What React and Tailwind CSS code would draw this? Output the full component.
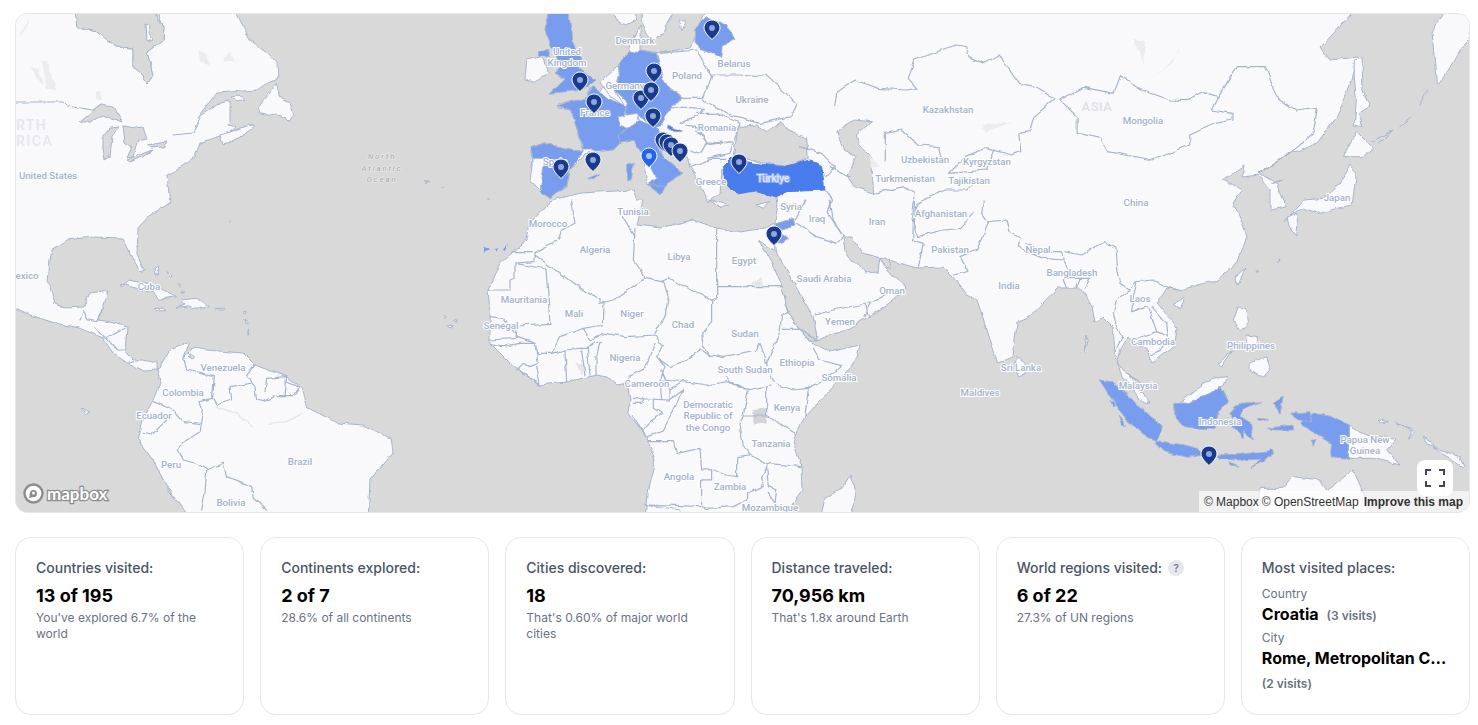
import React from "react";

// zoom-space helpers: coordinates below were read off crops of the map
const EUR = "translate(500 10) scale(.3333)";
const AFR = "translate(480 200) scale(.3333)";
const ASIA = "translate(800 10) scale(.433 .3333)";
const SASIA = "translate(850 200) scale(.3333)";
const SEA = "translate(1080 360) scale(.3333)";
const AME = "translate(10 260) scale(.3333)";

const LAND = "#f9f9fc";
const SEA_C = "#d9d9d9";
const COAST = "#a6b4cc";
const BLUE = "#789cee";
const DARK = "#4a7bec";

const Shape = ({ d, fill = LAND, stroke = COAST, w = 1 }) => (
  <path d={d} fill={fill} stroke={stroke} strokeWidth={w} strokeLinejoin="round" vectorEffect="non-scaling-stroke" />
);

const Lines = ({ d, w = 1.2, stroke = "#a6b4cc" }) => (
  <path d={d} fill="none" stroke={stroke} strokeWidth={w} strokeLinejoin="round" strokeLinecap="round" vectorEffect="non-scaling-stroke" />
);

const labels = [
  ["United States", 48, 179], ["Kazakhstan", 948, 113], ["Mongolia", 1143, 124], ["China", 1136, 206], ["Japan", 1337, 201],
  ["Uzbekistan", 925, 163], ["Kyrgyzstan", 987, 165], ["Turkmenistan", 905, 182], ["Tajikistan", 969, 184], ["Afghanistan", 941, 217],
  ["Iran", 877, 225], ["Iraq", 817, 222], ["Syria", 791, 210], ["Pakistan", 950, 253], ["Nepal", 1038, 253], ["Bangladesh", 1072, 276],
  ["India", 1009, 289], ["Oman", 892, 294], ["Saudi Arabia", 824, 282], ["Yemen", 840, 325], ["Laos", 1140, 302], ["Cambodia", 1153, 345],
  ["Philippines", 1251, 349], ["Malaysia", 1138, 389], ["Sri Lanka", 1021, 371], ["Maldives", 980, 396], ["Indonesia", 1220, 425],
  ["Papua New", 1365, 443], ["Guinea", 1365, 454], ["Denmark", 635, 44], ["United", 567, 55], ["Kingdom", 567, 66], ["Germany", 625, 89],
  ["France", 595, 116], ["Poland", 687, 79], ["Belarus", 734, 67], ["Ukraine", 752, 103], ["Romania", 717, 131], ["Greece", 711, 185],
  ["Spain", 555, 165], ["Tunisia", 633, 215], ["Morocco", 548, 227], ["Algeria", 595, 253], ["Libya", 679, 260], ["Egypt", 744, 264],
  ["Mauritania", 524, 303], ["Mali", 574, 317], ["Niger", 632, 317], ["Chad", 683, 328], ["Sudan", 745, 337], ["South Sudan", 745, 373],
  ["Ethiopia", 797, 366], ["Somalia", 839, 381], ["Senegal", 501, 329], ["Nigeria", 625, 361], ["Cameroon", 647, 387], ["Kenya", 787, 411],
  ["Democratic", 708, 408], ["Republic of", 708, 419], ["the Congo", 708, 431], ["Tanzania", 771, 447], ["Angola", 679, 480], ["Zambia", 730, 490],
  ["Mozambique", 770, 511], ["Cuba", 149, 290], ["exico", 27, 279], ["Venezuela", 223, 371], ["Colombia", 183, 396], ["Ecuador", 154, 419],
  ["Peru", 171, 468], ["Brazil", 300, 465], ["Bolivia", 231, 506],
];

const pins = [
  [712, 20], [580, 72], [654, 63], [641, 90], [651, 82], [594, 94], [653, 108], [663, 132], [667, 134], [671, 137], [680, 143],
  [649, 148, true], [593, 152], [561, 159], [739, 154], [774, 226], [1209, 446],
];

const Pin = ({ x, y, active }) => (
  <g transform={`translate(${x - 8} ${y})`}>
    <path d="M8 0C3.6 0 0 3.5 0 7.8 0 12.5 6 17.8 8 19.5 10 17.8 16 12.5 16 7.8 16 3.5 12.4 0 8 0Z" fill={active ? "#2563eb" : "#1a3a8c"} stroke="#fff" strokeWidth="1" />
    <circle cx="8" cy="8" r="3" fill={active ? "#a9c4f7" : "#8fa7dc"} />
  </g>
);

const WorldMap = () => (
  <svg viewBox="16 14 1453 498" className="block w-full h-full font-['Roboto',sans-serif]">
    <defs>
      <filter id="rough" filterUnits="userSpaceOnUse" x="0" y="0" width="1478" height="725">
        <feTurbulence type="fractalNoise" baseFrequency=".09" numOctaves="3" seed="4" result="n" />
        <feDisplacementMap in="SourceGraphic" in2="n" scale="4.5" xChannelSelector="R" yChannelSelector="G" />
      </filter>
    </defs>
    <rect x="0" y="0" width="1478" height="725" fill={SEA_C} />

    <g filter="url(#rough)">
      {/* north america */}
      <Shape d="M0 0 75 0 77 28 97 32 117 47 133 48 133 67 140 72 147 83 153 75 147 52 163 40 164 27 153 0 237 0 237 14 245 30 250 40 268 53 277 63 278 78 267 83 257 90 230 92 217 93 207 105 197 118 220 102 230 100 230 120 228 125 237 127 230 132 217 137 200 143 195 157 180 167 167 175 170 203 150 215 138 228 137 255 143 268 146 270 140 272 133 258 123 238 93 237 67 240 52 250 50 260 48 283 55 303 67 308 83 307 90 293 108 290 103 308 98 320 110 322 127 327 125 350 133 360 143 360 157 363 157 369 143 370 130 365 113 353 103 338 80 328 55 323 30 315 0 300Z" />
      <Shape d="M75 10 77 28 97 32 117 47 133 48 133 67 140 72 147 83 153 75 147 52 163 40 164 27 153 10Z" fill={SEA_C} />
      <Shape d="M160 367 170 350 190 342 183 358 193 348 207 350 243 353 255 365 287 377 302 387 308 408 338 423 363 425 390 438 392 453 370 480 368 520 190 520 167 487 153 460 138 440 143 420 153 400 160 383 157 368Z" />
      <Shape d="M80 122 100 105 113 107 122 122 103 115 90 122Z" fill={SEA_C} />
      <Shape d="M103 137 110 128 120 127 112 137 110 157 105 160 103 150Z" fill={SEA_C} />
      <Shape d="M123 125 143 128 147 138 138 140 133 157 127 158 132 147 125 142Z" fill={SEA_C} />
      <Shape d="M127 160 152 150 143 157 130 162Z" fill={SEA_C} />
      <Shape d="M147 145 167 142 163 147 150 148Z" fill={SEA_C} />
      <Shape d="M277 82 258 107 260 113 277 115 285 117 290 122 294 115 290 103 278 97Z" />
      <Shape d="M220 135 230 132 250 125 255 127 248 132 230 143 223 145Z" />
      <Shape d="M232 97 240 96 245 100 238 102Z" />
      <Shape d="M146 24 150 26 149 34 152 40 147 42Z" />
      <Lines d="M15 102 63 102 67 106 93 110 100 105 M173 135 193 133 200 118" w={1} />
      <path d="M22 30 28 20 26 30 19 37Z M30 67 37 68 43 85 39 82Z M42 60 48 61 56 90 47 90Z M197 50 206 54 210 67 202 62Z M223 58 230 53 235 61 225 62Z M97 92 101 91 102 100 97 100Z" fill="#ececee" />
      <path d="M423 180 432 181 426 183Z M440 186 445 187 441 188Z M229 222 231 220 230 224Z M487 198 490 198 488 200Z" fill={COAST} />

      {/* caribbean, central and south america detail */}
      <g transform={AME}>
        <Shape d="M325 80 360 60 400 70 450 85 500 110 445 118 430 95 380 85 345 75Z" />
        <Shape d="M510 120 560 115 595 140 545 150 540 140 500 145 525 135Z" />
        <Shape d="M433 145 465 145 468 152 445 153Z" />
        <Shape d="M615 145 645 145 640 150 620 150Z" />
        <Shape d="M435 25 445 20 445 45 438 45Z M470 35 490 50 485 55Z M505 70 515 75 510 80Z M510 95 520 90 515 100Z M705 175 715 190 708 195Z M715 210 720 225 712 225Z M700 155 708 155 705 165Z M215 448 240 455 225 465Z M1300 165 1310 170 1303 175Z M1335 175 1342 185 1335 185Z M1315 198 1330 195 1325 205Z" />
        <Shape d="M540 280 550 290 545 300 535 295Z" fill={SEA_C} />
        <Lines d="M210 180 220 155 235 180 260 185 280 140 M255 205 285 235 M290 235 345 205 M290 235 320 270 340 270 M370 305 360 310 M520 290 530 330 610 350 605 410 620 435 665 420 660 380 720 370 M735 315 710 350 735 380 740 420 760 425 790 410 M765 395 770 355 830 350 825 410 M825 360 870 380 850 410 800 410 M605 415 570 425 580 460 570 515 515 550 505 570 520 600 560 610 590 630 640 610 650 650 725 680 730 715 770 750 M430 425 490 450 520 485 570 490 M400 520 425 525 480 470 M590 630 585 700 575 750" />
        <Lines d="M615 440 680 460 730 500 M775 490 830 485 880 460" stroke="#e4e4e8" />
      </g>

      {/* afro-eurasia */}
      <Shape d="M540 190 530 180 533 160 530 148 543 143 583 152 575 123 572 110 557 108 557 105 587 98 590 87 600 93 607 82 618 65 628 53 630 43 640 25 640 50 660 53 690 48 697 35 700 22 710 0 1352 0 1352 13 1320 48 1328 60 1359 57 1352 77 1337 117 1317 143 1298 152 1289 153 1259 173 1276 183 1287 207 1270 210 1270 190 1259 175 1242 177 1244 165 1222 180 1242 190 1233 203 1244 227 1247 237 1237 263 1217 280 1180 290 1167 288 1157 303 1177 327 1175 345 1152 363 1148 350 1128 337 1122 347 1117 363 1130 377 1150 403 1143 402 1122 377 1115 353 1113 327 1103 317 1095 322 1092 305 1080 288 1057 288 1030 317 1017 323 1013 357 998 363 977 300 965 293 953 277 943 267 917 268 888 260 885 268 907 287 890 303 868 317 850 328 817 340 813 317 790 277 775 252 773 232 778 205 777 197 757 192 737 195 727 183 722 170 720 193 708 202 697 180 690 167 685 150 660 133 658 143 663 157 682 173 677 177 667 183 662 193 648 185 643 153 633 140 620 143 613 150 587 153 570 170 567 187 555 193 550 198Z" />
      <Shape d="M552 200 580 193 633 190 637 200 643 200 637 225 660 228 693 220 717 228 740 232 765 228 773 222 775 250 782 285 788 313 808 340 817 345 830 352 860 345 857 357 833 387 805 417 797 430 793 443 802 467 803 490 780 520 645 520 647 493 655 460 647 437 628 413 630 400 627 383 617 385 608 377 597 375 567 382 540 385 510 363 490 343 490 313 488 290 500 263 513 252 527 240 530 223Z" />
      {/* seas */}
      <g transform={EUR}>
        <Shape d="M700 435 715 350 770 345 800 365 845 335 860 360 920 385 925 445 860 470 770 455 735 440Z" fill={SEA_C} />
        <Shape d="M335 -20 400 -20 410 30 380 45 350 35Z" />
        <Shape d="M430 -20 535 -20 500 40 490 70 460 90 440 75 425 40Z" />
        <Shape d="M540 30 560 30 545 65Z" />
        <Shape d="M80 150 120 140 140 170 145 190 100 215 75 210Z" />
        <Shape d="M768 585 810 575 790 595Z" />
        <Shape d="M625 570 690 585 660 590Z" />
      </g>
      <g transform={AFR}>
        <Shape d="M835 120 870 145 885 150 930 230 970 300 1000 350 1012 420 985 420 925 340 905 255 880 195 860 160Z" fill={SEA_C} />
        <Shape d="M1110 825 1130 880 1105 960 1020 960 1035 895 1090 860Z" />
        <path d="M820 630 860 625 860 670 820 675Z" fill="#d4d4d6" />
        <path d="M815 255 845 230 850 262 835 258Z M285 485 315 495 305 525Z" fill="#e6e6e8" />
        <Lines d="M275 0 285 70 245 90 235 120 165 155 165 185 M100 155 160 155 M160 185 105 190 105 235 90 240 90 270 25 270 M165 165 320 280 360 295 360 310 400 300 495 235 M198 207 210 370 110 375 M198 207 105 190 M372 310 370 375 310 385 M465 85 460 180 490 220 495 235 M430 50 465 110 M495 235 545 245 565 235 695 300 710 295 710 85 M712 260 905 260 M550 245 565 290 555 350 525 400 M310 385 330 420 370 400 440 410 525 405 M695 300 695 365 665 400 670 440 690 470 M540 480 570 500 620 480 660 450 690 470 M525 405 550 440 530 470 555 500 540 540 545 600 M525 430 490 510 445 530 430 555 M690 470 710 465 730 470 780 460 830 450 840 430 855 470 860 490 M860 490 900 395 905 345 930 335 M905 385 960 385 1010 420 M1000 445 1020 480 1085 497 1030 540 985 565 M885 550 940 570 985 565 M860 490 870 530 880 545 M570 570 610 545 680 555 740 545 805 570 M740 530 750 545 805 570 870 555 M805 570 790 645 860 645 860 560 M985 565 975 650 M860 645 945 700 M790 645 780 670 790 740 810 765 M810 765 860 790 965 800 M810 765 770 770 770 830 M505 725 580 725 590 760 660 745 665 810 695 810 695 840 665 840 665 920 M460 595 570 600 610 570 575 640 550 690 500 710 460 650 M460 610 490 610 490 595 M520 595 520 625 545 640 510 665 490 690 M545 540 610 545 M545 510 570 570 570 600 M700 810 740 825 770 830 M865 790 845 830 850 860 800 880 800 900 760 920 680 925 665 920 M860 800 865 860 890 870 885 910 865 880 M495 912 660 920 M495 912 600 930 M110 375 105 410 165 430 175 460 215 460 240 410 310 385 M175 460 215 460 255 450 300 445 320 445 345 425 365 425 M255 450 260 545 M305 450 315 525 M322 445 330 525 M348 470 348 525 M360 425 350 470 M30 350 70 355 105 400 M30 420 110 415 M30 430 75 440 M60 440 120 430 165 430 175 490 150 500 130 490 110 510 M180 555 170 500 M120 510 180 555 M1005 345 1060 330 1155 312 1205 295 1230 265 M1155 312 1170 350 M945 60 975 0 M950 70 1010 110 1070 130 1090 110 M1050 0 1060 60 1090 110" />
        <path d="M10 140 35 150 15 158Z M45 150 55 145 50 158Z M68 150 85 130 75 152Z" fill={BLUE} />
      </g>
      <Shape d="M843 238 852 238 862 253 888 260 892 267 885 268 880 258 878 272 865 273 858 263 851 260 845 250Z" fill={SEA_C} />

      <g transform={ASIA}>
        <Shape d="M85 365 125 330 165 335 130 375 135 400 165 440 170 550 125 530 110 500 130 440 100 420Z" fill={SEA_C} />
        <path d="M875 100 860 160 805 210 840 180 870 130Z M420 345 490 335 430 365Z M770 85 795 95 795 165 780 120Z M160 440 185 470 165 475Z" fill="#ececee" />
        <Shape d="M1280 150 1298 145 1300 240 1315 290 1290 310 1300 350 1280 345 1285 270 1280 200Z" />
        <Shape d="M1500 -20 1460 70 1470 225 1500 180 1530 110 1545 90 1560 -20Z" />
        <Shape d="M1285 365 1325 415 1300 440 1255 440 1270 400Z" />
        <Shape d="M1270 465 1285 490 1275 585 1240 595 1200 610 1160 595 1125 625 1120 635 1165 570 1210 565 1250 520Z" />
        <Shape d="M1125 625 1150 610 1145 675 1130 650Z" />
        <Lines d="M1320 395 1370 360 1335 400 M1385 350 1410 325 M1430 285 1450 240" w={1} />
        <Lines d="M80 290 85 245 130 210 180 235 245 240 270 235 250 205 265 150 360 105 385 110 390 140 425 160 460 135 505 220 545 230 590 265 540 320 530 365 505 370 510 425 490 435 430 415 380 440 M197 455 197 370 235 360 275 405 320 410 325 440 345 465 M600 270 655 232 725 250 740 197 790 240 855 270 890 272 930 245 965 260 M965 260 1010 170 1075 170 1100 260 1145 300 1195 292 1185 370 1150 410 1130 430 M600 270 640 320 640 370 695 385 710 425 815 450 900 405 900 375 960 340 1000 330 1000 310 950 300 965 260 M1060 490 1130 430 M1090 520 1120 505 M265 555 260 690 M265 550 240 530 170 550 M265 600 270 580 335 540 385 540 410 510 M380 440 345 490 430 480 450 420 M0 410 50 430 80 470 60 500 M60 540 75 570 65 610 100 680" />
      </g>
      <g transform={SASIA}>
        <Shape d="M500 470 525 490 525 525 505 530 495 500Z" />
        <Shape d="M1185 205 1165 255 1155 230Z" />
        <Shape d="M970 310 1005 295 990 325Z" />
        <Shape d="M1160 320 1190 325 1195 365 1175 395 1150 360Z" />
        <Shape d="M1200 490 1250 470 1262 510 1240 535 1200 510Z" />
        <Shape d="M1190 405 1225 410 1225 440 1190 430Z" />
        <Shape d="M1105 495 1150 450 1115 500Z" />
        <Shape d="M710 405 715 420 705 455Z M1220 215 1228 217 1220 220Z M1280 185 1292 175 1285 188Z" />
        <Lines d="M395 40 415 70 380 150 330 170 355 215 310 225 M185 50 200 110 280 90 330 85 370 40 M190 120 220 130 205 200 M190 0 185 50 M415 65 470 60 480 95 510 110 M510 110 505 140 530 155 580 175 640 180 635 155 600 155 530 130 M645 155 695 165 765 125 795 145 800 210 810 250 840 270 M640 185 660 215 640 240 650 265 M680 262 690 235 650 235 M690 235 720 235 705 265 M835 270 800 295 790 340 800 380 815 410 795 460 M835 270 860 245 910 240 960 265 985 270 M860 250 850 290 845 335 895 320 920 395 M905 320 950 370 955 410 M845 420 920 395 955 410 930 455 905 465 M830 520 880 555 M45 350 60 310 M400 0 395 40" />
      </g>

      {/* indonesia and neighbours */}
      <g transform={SEA}>
        <Shape d="M500 490 545 385 610 385 640 350 720 360 740 390 820 330 860 420 890 490Z" />
        <Shape d="M300 130 340 95 400 55 440 50 430 75 390 100 320 130Z" />
        <Shape d="M805 195 860 225 950 235 920 270 960 315 880 295 830 295 805 295Z" />
        <Shape d="M58 60 95 65 170 130 215 175 245 195 232 245 205 235 130 170Z" fill={BLUE} />
        <Shape d="M225 250 240 243 300 253 345 262 378 285 320 292 250 275Z" fill={BLUE} />
        <Shape d="M283 130 320 130 390 100 420 80 445 130 415 155 405 205 345 205 310 200 285 170Z" fill={BLUE} />
        <Shape d="M450 160 480 130 545 125 490 145 480 165 510 185 520 240 490 215 490 235 460 200Z" fill={BLUE} />
        <Shape d="M660 190 700 160 760 170 805 195 805 295 750 290 755 250 690 210Z" fill={BLUE} />
        <Shape d="M410 285 480 283 560 273 578 268 580 285 510 325 545 298 480 300 420 298Z" fill={BLUE} />
        <Shape d="M560 205 640 195 640 210 590 210Z M580 130 610 110 600 160Z M630 160 690 155 695 185 660 180Z M535 175 565 178 540 185Z M695 240 708 240 700 262Z M445 305 480 318 450 315Z M90 120 110 140 100 140Z M115 165 140 200 125 195Z" fill={BLUE} />
        <Shape d="M1030 230 1075 265 1040 255Z M895 180 925 185 900 188Z M950 190 1005 215 985 235 995 215Z M1060 265 1140 290 1155 325 1100 290Z" />
      </g>

      {/* visited countries */}
      <g transform={EUR}>
        <Shape d="M155 -20 205 -20 215 90 245 150 235 170 285 210 250 240 150 250 195 205 165 190 185 170 155 110 135 60Z" fill={BLUE} />
        <Shape d="M115 125 150 115 145 140 115 140Z" fill={BLUE} />
        <Shape d="M90 415 130 400 250 425 210 480 200 530 165 550 150 565 120 545 135 445 100 445Z" fill={BLUE} />
        <Shape d="M168 290 262 262 275 228 325 265 380 290 370 320 410 340 355 375 360 400 340 420 250 420 225 340 215 300Z" fill={BLUE} />
        <Shape d="M358 160 385 125 410 130 420 120 470 130 490 215 550 265 515 285 510 300 480 350 460 345 410 315 375 310 385 280 345 240 355 200Z" fill={BLUE} />
        <Shape d="M355 320 410 310 415 335 385 355 358 345Z" />
        <Shape d="M300 215 355 165 358 200 345 240 375 290 340 265Z" />
        <Shape d="M415 335 470 345 480 370 470 400 490 440 545 490 530 500 500 520 485 550 445 525 470 505 430 430 400 390 360 400 355 375Z" fill={BLUE} />
        <Shape d="M380 465 400 460 395 505 380 510Z" fill={BLUE} />
        <Shape d="M445 525 495 525 480 555Z" fill={BLUE} />
        <Shape d="M265 505 300 490 280 510Z" fill={BLUE} />
        <Shape d="M500 345 555 365 525 365 500 355Z" fill={DARK} />
        <Shape d="M588 50 620 20 680 45 705 85 670 105 665 145 640 130 600 115 585 100Z" fill={BLUE} />
        <Shape d="M670 470 700 440 760 460 850 470 930 450 965 470 975 540 860 545 830 560 770 545 710 555 680 520Z" fill={DARK} stroke={DARK} />
        <Lines d="M480 130 590 120 635 200 610 265 550 265 490 215 M635 195 720 195 770 200 795 190 890 280 875 320 780 340 700 320 610 270 M515 290 610 295 590 320 540 340 M590 310 650 310 720 340 700 395 620 400 590 360 M620 405 700 395 690 430 620 445 M555 345 590 350 620 400 600 430 570 420 M575 470 640 445 680 445 M990 470 1050 500" />
      </g>
      <g transform={AFR}>
        <Shape d="M885 72 940 55 945 75 895 92 925 118 905 130 885 125Z" fill={BLUE} />
      </g>
    </g>

    {/* labels */}
    <text x="16" y="130" fontSize="14" letterSpacing="1.5" fontWeight="500" fill="#e6e6ec">RTH</text>
    <text x="16" y="146" fontSize="14" letterSpacing="1.5" fontWeight="500" fill="#e6e6ec">RICA</text>
    <text x="1097" y="111" textAnchor="middle" fontSize="13" letterSpacing=".5" fontWeight="500" fill="#e0e0e5">ASIA</text>
    {["North", "Atlantic", "Ocean"].map((t, i) => (
      <text key={t} x="382" y={159 + i * 11.6} textAnchor="middle" fontSize="8" fontStyle="italic" letterSpacing="1.8" fill="#a9a9ad" stroke="#e6e6e6" strokeWidth="1.5" paintOrder="stroke">{t}</text>
    ))}
    {labels.map(([t, x, y]) => (
      <text key={t + x} x={x} y={y} textAnchor="middle" fontSize="9.7" fontWeight="500" fill="#a3b1ca" stroke="#fff" strokeWidth="2" paintOrder="stroke">{t}</text>
    ))}
    <text x="773" y="182" textAnchor="middle" fontSize="10" fontWeight="500" fill="#e6ecfb" stroke="#fff" strokeOpacity=".35" strokeWidth="2" paintOrder="stroke">Türkiye</text>

    {pins.map(([x, y, active]) => <Pin key={x} x={x} y={y} active={active} />)}
  </svg>
);

const Card = ({ title, value, sub, help }) => (
  <div className="h-[178px] min-w-0 bg-white border border-gray-200 rounded-2xl p-5">
    <div className="flex items-center gap-1.5 text-sm leading-5 font-medium text-gray-600">
      {title}
      {help && <span className="w-4 h-4 rounded-full bg-gray-200 text-[10px] font-medium flex items-center justify-center text-gray-500">?</span>}
    </div>
    <div className="mt-1 text-lg leading-7 font-bold text-black">{value}</div>
    <div className="text-xs leading-4 text-gray-500">{sub}</div>
  </div>
);

export default function App() {
  return (
    <div className="pl-[15px] pr-2 pt-[13px] pb-2 bg-white font-['Inter',sans-serif]">
      <div className="relative h-[500px] overflow-hidden rounded-xl border border-gray-200">
        <WorldMap />
        <div className="absolute left-[7px] bottom-[8px] flex items-center gap-[3px]">
          <svg width="21" height="21" viewBox="0 0 21 21">
            <circle cx="10.5" cy="10.5" r="9" fill="#fff" stroke="#8c8c8c" strokeWidth="2.4" />
            <path d="M6 15l1-5a3.5 3.5 0 1 1 3.5 4z" fill="#8c8c8c" />
            <circle cx="10.5" cy="10" r="1.5" fill="#fff" />
          </svg>
          <span className="font-['Lato',sans-serif] text-[17px] leading-none font-bold text-white [paint-order:stroke] [-webkit-text-stroke:2.5px_#8c8c8c]">mapbox</span>
        </div>
        <button className="absolute right-4 bottom-4 w-9 h-9 rounded-lg bg-white flex items-center justify-center">
          <svg width="20" height="18" viewBox="0 0 20 18" fill="none" stroke="#3f4656" strokeWidth="2">
            <path d="M1 6V1h5M14 1h5v5M19 12v5h-5M6 17H1v-5" />
          </svg>
        </button>
        <div className="absolute right-0 bottom-0 h-[21px] pl-[5px] pr-[6px] flex items-center gap-[3px] bg-white/65 font-['Liberation_Sans',sans-serif] text-xs text-[#333]">
          <span>© Mapbox</span>
          <span>© OpenStreetMap</span>
          <span className="font-bold ml-[2px] text-[#333]">Improve this map</span>
        </div>
      </div>

      <div className="mt-6 grid grid-cols-6 gap-4">
        <Card title="Countries visited:" value="13 of 195" sub="You've explored 6.7% of the world" />
        <Card title="Continents explored:" value="2 of 7" sub="28.6% of all continents" />
        <Card title="Cities discovered:" value="18" sub="That's 0.60% of major world cities" />
        <Card title="Distance traveled:" value="70,956 km" sub="That's 1.8x around Earth" />
        <Card title="World regions visited:" value="6 of 22" sub="27.3% of UN regions" help />
        <div className="h-[178px] min-w-0 bg-white border border-gray-200 rounded-2xl p-5">
          <div className="text-sm leading-5 font-medium text-gray-600">Most visited places:</div>
          <div className="mt-2 text-xs leading-4 text-gray-500">Country</div>
          <div className="flex items-baseline gap-2">
            <span className="text-base leading-6 font-bold text-black">Croatia</span>
            <span className="text-xs font-semibold text-gray-500">(3 visits)</span>
          </div>
          <div className="mt-1 text-xs leading-4 text-gray-500">City</div>
          <div className="text-base leading-6 font-bold text-black truncate">Rome, Metropolitan City of Rome</div>
          <div className="mt-1 text-xs leading-5 font-semibold text-gray-500">(2 visits)</div>
        </div>
      </div>
    </div>
  );
}
